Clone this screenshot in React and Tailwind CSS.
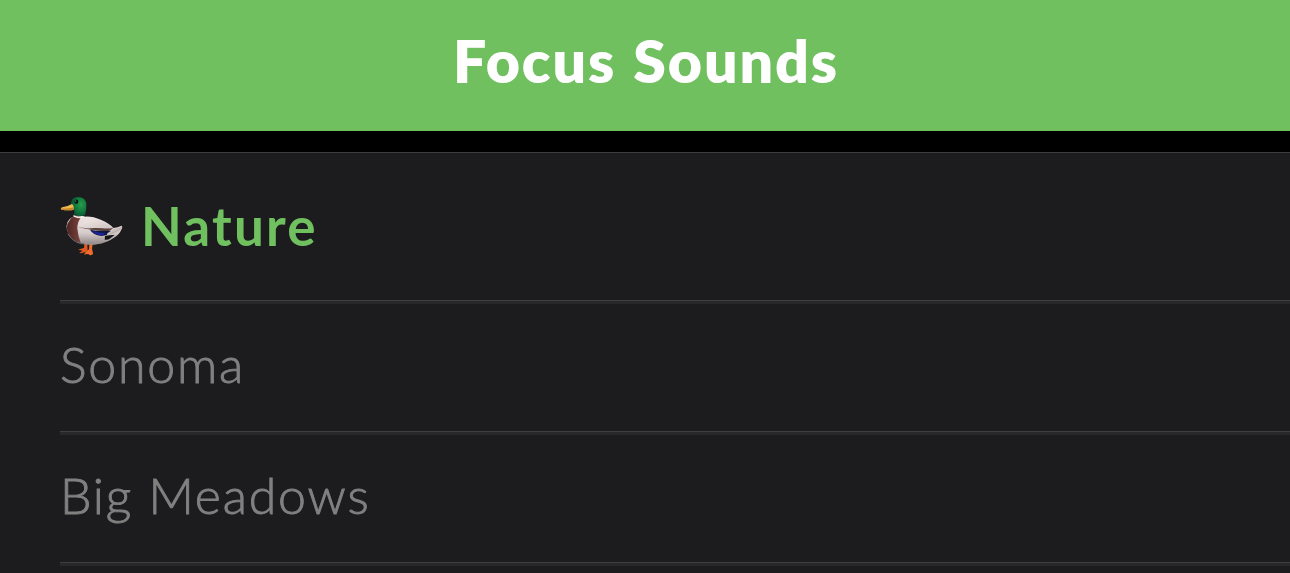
import React from "react";

const sounds = ["Sonoma", "Big Meadows"];

const Duck = () => (
  <svg viewBox="30 30 192 189" className="w-16 h-[63px] shrink-0" aria-hidden="true">
    <defs>
      <radialGradient id="head" cx="0.65" cy="0.4" r="0.65">
        <stop offset="0" stopColor="#2a9c4e" />
        <stop offset="0.6" stopColor="#10783c" />
        <stop offset="1" stopColor="#0a5034" />
      </radialGradient>
      <linearGradient id="body" x1="0" y1="0" x2="0" y2="1">
        <stop offset="0" stopColor="#efe6e5" />
        <stop offset="0.6" stopColor="#d6cccb" />
        <stop offset="1" stopColor="#8f8384" />
      </linearGradient>
      <linearGradient id="breast" x1="0" y1="0" x2="1" y2="0">
        <stop offset="0" stopColor="#4d2422" />
        <stop offset="1" stopColor="#7c4640" />
      </linearGradient>
      <linearGradient id="wing" x1="0" y1="0" x2="1" y2="1">
        <stop offset="0" stopColor="#f4ecea" />
        <stop offset="1" stopColor="#c9bdbb" />
      </linearGradient>
    </defs>

    {/* feet */}
    <path d="M103 176 L102 189 Q92 190 84 195 Q93 195 98 198 Q90 200 88 205 Q98 205 106 201 L113 199 L112 176 Z" fill="#dd5a22" />
    <path d="M118 176 L117 193 Q108 199 102 209 Q112 206 116 208 Q120 213 125 209 Q131 209 128 200 L126 191 L128 177 Z" fill="#f16b2c" />

    {/* body */}
    <path d="M73 93 Q88 89 104 95 Q126 93 154 105 Q178 115 190 129 Q203 128 215 122 Q219 124 215 132 Q208 149 192 158 Q174 171 149 176 Q117 184 87 172 Q60 158 51 136 Q44 107 73 93 Z" fill="url(#body)" />
    <path d="M72 92 Q84 90 94 96 Q82 110 82 130 Q84 153 92 173 Q65 166 53 145 Q43 113 72 92 Z" fill="url(#breast)" />
    <path d="M54 146 Q66 169 93 176 Q127 182 159 173" fill="none" stroke="#a59998" strokeWidth="2" />

    {/* wing and tail */}
    <path d="M83 125 Q98 104 126 103 Q158 106 189 130 Q157 136 128 134 Q101 133 79 125 Z" fill="url(#wing)" />
    <path d="M80 124 Q101 131 120 130 Q137 128 157 130 Q177 132 190 128 Q183 137 168 139 Q146 137 124 134 Q97 131 80 124 Z" fill="#594240" />
    <path d="M120 134 Q143 140 181 137 L187 142 Q174 152 154 153 Q129 150 120 134 Z" fill="#11183f" />
    <path d="M126 137 Q143 144 166 144 L158 151 Q136 150 126 137 Z" fill="#1d24a0" />
    <path d="M172 145 L191 132 Q207 130 216 122 Q217 132 205 142 Q187 149 170 153 Z" fill="#cbbfbd" />
    <path d="M165 153 Q181 149 194 150 L181 160 Q172 166 164 164 Z" fill="#141318" />
    <path d="M181 146 Q202 139 214 128" fill="none" stroke="#a99d9b" strokeWidth="1.5" />

    {/* neck and head */}
    <path d="M70 90 Q84 97 103 94 L104 99 Q86 101 71 95 Z" fill="#eef0e6" />
    <path d="M63 53 Q65 37 84 36 Q106 36 109 56 Q110 72 105 91 Q88 96 71 89 Q75 80 72 74 Q63 68 63 53 Z" fill="url(#head)" />
    <ellipse cx="79" cy="50" rx="6" ry="6.5" fill="#081713" />
    <circle cx="77" cy="48" r="1.5" fill="#b4cfb8" />

    {/* bill */}
    <path d="M66 57 Q74 64 70 75 Q55 77 34 74 Q30 70 37 67 Q54 64 66 57 Z" fill="#efba52" />
    <path d="M34 70 Q53 72 70 67 L70 75 Q53 77 34 74 Z" fill="#c98528" />
  </svg>
);

const Divider = () => (
  <div className="ml-[60px] h-1 bg-[#28282a] border-t border-[#3f3f41]" />
);

const SoundRow = ({ name }) => (
  <li>
    <div className="flex items-center h-[127px] pl-[60px] pb-[7px]">
      <span className="text-[50px] leading-none font-light tracking-[1.8px] text-[#808080] [-webkit-text-stroke:0.9px_#808080]">
        {name}
      </span>
    </div>
    <Divider />
  </li>
);

const App = () => {
  return (
    <div className="h-screen overflow-hidden bg-black font-['Lato','Open_Sans',sans-serif]">
      <header className="flex items-center justify-center h-[131px] pb-[10px] pl-0.5 bg-[#70c060]">
        <h1 className="text-[59px] leading-none font-extrabold tracking-[1.9px] [word-spacing:1.5px] text-white">
          Focus Sounds
        </h1>
      </header>

      <main className="mt-[21px] h-[421px] border-t border-[#3d3d3f] bg-[#1c1c1e]">
        <div className="flex items-center h-[147px] pl-[60px] gap-[17px]">
          <Duck />
          <h2 className="pb-0.5 text-[53px] leading-none font-bold tracking-[2.2px] text-[#70c060]">
            Nature
          </h2>
        </div>
        <Divider />
        <ul>
          {sounds.map((name) => (
            <SoundRow key={name} name={name} />
          ))}
        </ul>
      </main>
    </div>
  );
};

export default App;
